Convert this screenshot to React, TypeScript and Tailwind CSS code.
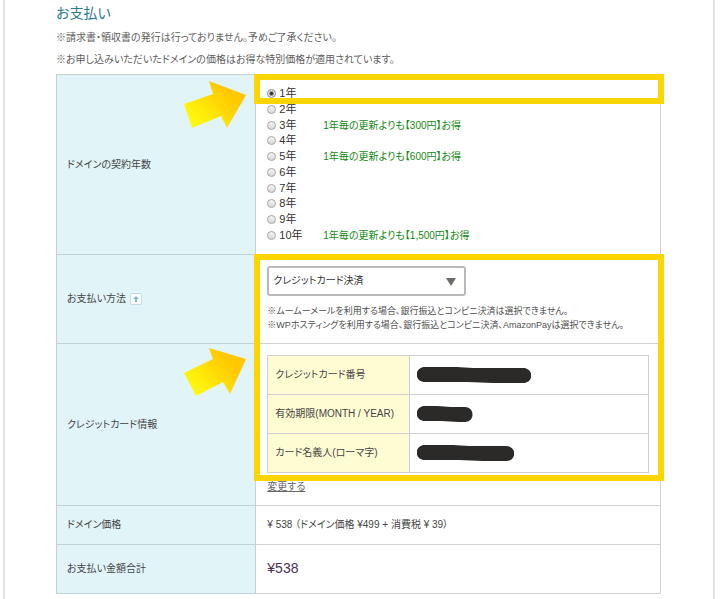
import type { ReactNode } from "react";

const discounts: Record<number, string> = {
  3: "1年毎の更新よりも【300円】お得",
  5: "1年毎の更新よりも【600円】お得",
  10: "1年毎の更新よりも【1,500円】お得",
};

const years = Array.from({ length: 10 }, (_, i) => i + 1);

const cardRows = [
  {
    label: "クレジットカード番号",
    width: 114,
    path: "M8 0H40L56 1H106C117 1 117 16 106 16H76L50 15H8C-3 15 -3 0 8 0Z",
  },
  {
    label: "有効期限(MONTH / YEAR)",
    width: 56,
    path: "M8 0H20L34 1H48C58 1 58 16 48 16H42L24 15H8C-3 15 -3 0 8 0Z",
  },
  {
    label: "カード名義人(ローマ字)",
    width: 97,
    path: "M8 0H36L52 1H89C100 1 100 16 89 16H66L42 15H8C-3 15 -3 0 8 0Z",
  },
];

function Row({ label, height, overlay, htmlFor, children }: {
  label: ReactNode;
  height: string;
  overlay?: ReactNode;
  htmlFor?: string;
  children: ReactNode;
}) {
  return (
    <tr className={height}>
      <th scope="row" className="relative border border-[#c3d2d5] bg-[#e1f5f9] px-[10px] text-left font-normal">
        {htmlFor ? <label htmlFor={htmlFor}>{label}</label> : label}
        {overlay}
      </th>
      <td className="relative border border-[#d2d2d6] px-[11px]">{children}</td>
    </tr>
  );
}

function Arrow({ id, className, points }: { id: string; className: string; points: string }) {
  return (
    <svg viewBox="0 0 64 50" className={`absolute h-[50px] w-16 ${className}`} aria-hidden="true">
      <defs>
        <linearGradient id={id} x1="0" y1="1" x2="0.8" y2="0.4">
          <stop offset="0" stopColor="#ffff1a" />
          <stop offset="0.4" stopColor="#ffee0a" />
          <stop offset="1" stopColor="#ffc800" />
        </linearGradient>
      </defs>
      <polygon points={points} fill={`url(#${id})`} />
    </svg>
  );
}

export default function App() {
  return (
    <div className="bg-white px-[3px] font-['Liberation_Sans','Noto_Sans_CJK_JP',sans-serif] text-[10px] text-[#454545] [font-feature-settings:'palt']">
      <main className="mr-[2px] border-x-2 border-[#e2e2e2] pt-1 pr-[52px] pb-[5px] pl-[51px]">
        <h1 className="text-[14px] leading-[18px] text-[#2b7a90]">お支払い</h1>
        <p className="mt-[5px] leading-[22px] text-[#606060]">※請求書・領収書の発行は行っておりません。予めご了承ください。</p>
        <p className="leading-[22px] text-[#606060]">※お申し込みいただいたドメインの価格はお得な特別価格が適用されています。</p>

        <table className="mt-[3px] w-full table-fixed border-collapse leading-4">
          <colgroup>
            <col className="w-[33%]" />
            <col />
          </colgroup>
          <tbody>
            <Row
              label="ドメインの契約年数"
              height="h-[180px]"
              overlay={
                <Arrow id="arrow-year" className="top-1 right-2" points="1,25 30,15 26,2 63,16 44,49 38,37 9,49" />
              }
            >
              <div role="radiogroup" aria-label="ドメインの契約年数" className="flex h-[157px] flex-col justify-between leading-[15px]">
                {years.map((year) => (
                  <div key={year} className="flex items-center">
                    <label className="flex w-14 items-center gap-[3px] text-[11px] text-[#333]">
                      <input
                        type="radio"
                        name="years"
                        defaultChecked={year === 1}
                        className="size-[9px] shrink-0 appearance-none rounded-full border border-[#a8a8a8] bg-linear-to-b from-[#f4f4f4] to-[#d9d9d9] checked:border-[#8a8a8a] checked:bg-[radial-gradient(circle,#333_0_1px,#eee_3px)]"
                      />
                      {year}年
                    </label>
                    <span className="text-[#158a15]">{discounts[year]}</span>
                  </div>
                ))}
              </div>
              <div className="pointer-events-none absolute -top-px -right-1 -left-[2px] h-[30px] border-6 border-[#ffd500]" />
            </Row>

            <Row
              htmlFor="payment"
              label={
                <span className="flex items-center gap-1">
                  お支払い方法
                  <span className="flex size-3 items-center justify-center rounded-xs border border-[#c6dfe6] bg-white">
                    <svg viewBox="0 0 6 6" className="size-[6px]" aria-hidden="true">
                      <path d="M3 0 6 3H4V6H2V3H0Z" fill="#7fbccb" />
                    </svg>
                  </span>
                </span>
              }
              height="h-[89px]"
            >
              <div className="relative w-[199px]">
                <select
                  id="payment"
                  className="h-[30px] w-full appearance-none rounded-[3px] border-2 border-[#b9b9b9] bg-white px-1 text-[#333]"
                >
                  <option>クレジットカード決済</option>
                </select>
                <svg viewBox="0 0 10 8" className="pointer-events-none absolute top-3 right-[10px] h-2 w-[10px]" aria-hidden="true">
                  <path d="M0 0H10L5 8Z" fill="#6d6d68" />
                </svg>
              </div>
              <p className="mt-2 text-[9px] leading-[14px] whitespace-nowrap text-[#505050]">
                ※ムームーメールを利用する場合、銀行振込とコンビニ決済は選択できません。
                <br />
                ※WPホスティングを利用する場合、銀行振込とコンビニ決済、AmazonPayは選択できません。
              </p>
              <div className="pointer-events-none absolute -top-px -right-1 -left-[2px] z-10 h-[227px] border-6 border-[#ffd500]" />
            </Row>

            <Row
              label="クレジットカード情報"
              height="h-[162px]"
              overlay={
                <Arrow id="arrow-card" className="top-1 right-2" points="1,25 30,11 26,0 63,11 47,46 40,34 13,48" />
              }
            >
              <table className="w-full table-fixed border-collapse">
                <colgroup>
                  <col className="w-[142px]" />
                  <col />
                </colgroup>
                <tbody>
                  {cardRows.map((row) => (
                    <tr key={row.label} className="h-[39px]">
                      <th scope="row" className="border border-[#d0d0d0] bg-[#fffbd3] px-[7px] text-left font-normal whitespace-nowrap">
                        {row.label}
                      </th>
                      <td className="border border-[#d0d0d0] px-[7px]">
                        <svg width={row.width} height="16" role="img" aria-label="非表示">
                          <path d={row.path} fill="#2b2a29" />
                        </svg>
                      </td>
                    </tr>
                  ))}
                </tbody>
              </table>
              <a href="#" className="mt-[6px] block w-fit text-[#666] underline">変更する</a>
            </Row>

            <Row label="ドメイン価格" height="h-[39px]">
              ¥ 538 （ドメイン価格 ¥499 + 消費税 ¥ 39）
            </Row>

            <Row label="お支払い金額合計" height="h-[49px]">
              <strong className="text-[14px] font-normal text-[#4b3350]">¥538</strong>
            </Row>
          </tbody>
        </table>
      </main>
    </div>
  );
}
